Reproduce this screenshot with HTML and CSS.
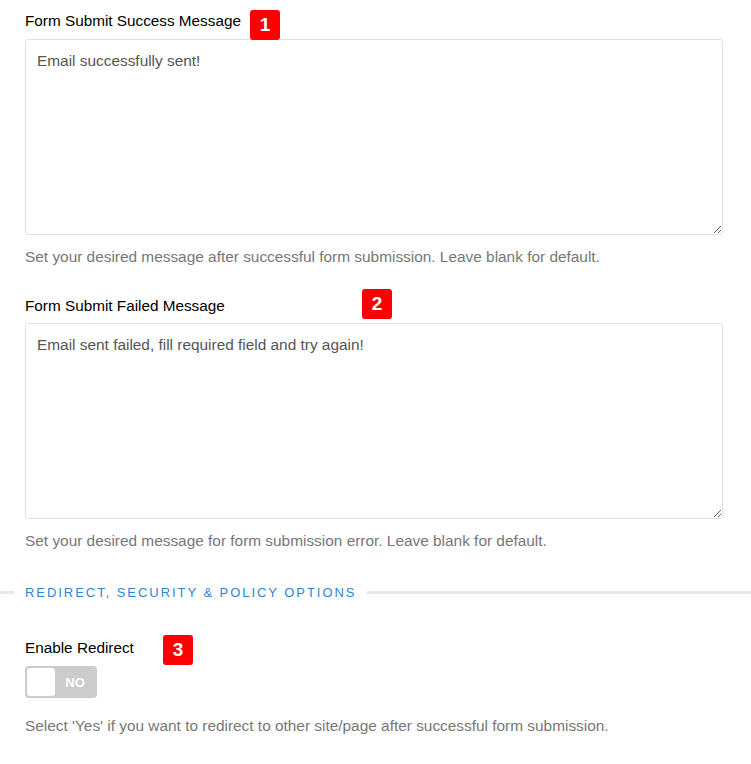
FILE: index.html
```html
<!DOCTYPE html>
<html>
<head>
<meta charset="utf-8">
<link rel="stylesheet" href="styles.css">
</head>
<body>
<div class="page">
  <div class="field">
    <div class="label-row"><label class="label">Form Submit Success Message</label><span class="badge badge-1">1</span></div>
    <textarea class="area">Email successfully sent!</textarea>
    <p class="help">Set your desired message after successful form submission. Leave blank for default.</p>
  </div>
  <div class="field field-2">
    <div class="label-row"><label class="label">Form Submit Failed Message</label><span class="badge badge-2">2</span></div>
    <textarea class="area">Email sent failed, fill required field and try again!</textarea>
    <p class="help">Set your desired message for form submission error. Leave blank for default.</p>
  </div>
  <div class="section">
    <span class="section-line short"></span>
    <span class="section-title">Redirect, Security &amp; Policy Options</span>
    <span class="section-line long"></span>
  </div>
  <div class="field field-3">
    <div class="label-row"><label class="label">Enable Redirect</label><span class="badge badge-3">3</span></div>
    <div class="toggle"><span class="knob"></span><span class="toggle-text">NO</span></div>
    <p class="help">Select 'Yes' if you want to redirect to other site/page after successful form submission.</p>
  </div>
</div>
</body>
</html>
```
FILE: styles.css
```css
* { box-sizing: border-box; }
html, body { margin: 0; padding: 0; background: #fff; }
body { font-family: "Liberation Sans", Arial, sans-serif; }
.page { width: 751px; padding-top: 11px; }
.field { padding: 0 29px 0 25px; }
.label-row { position: relative; height: 28px; }
.label { font-size: 15.3px; color: #000; line-height: 20px; display: block; }
.badge {
  position: absolute; width: 30px; height: 30px; background: #f00; color: #fff;
  border-radius: 3px; font-weight: bold; font-size: 19px; line-height: 30px; text-align: center;
}
.badge-1 { left: 225px; top: -1px; }
.badge-2 { left: 337px; top: -7px; }
.badge-3 { left: 138px; top: -3px; }
.area {
  display: block; width: 698px; height: 196px; border: 1px solid #e2e2e2; border-radius: 3px;
  padding: 12px 11px; font-family: "Liberation Sans", Arial, sans-serif; font-size: 15.4px; color: #555;
  resize: vertical; outline: none; margin: 0;
}
.help { margin: 12px 0 0; font-size: 15.4px; color: #777; line-height: 20px; }
.field-2 { margin-top: 29px; }
.field-2 .label-row { height: 27px; }
.section { display: flex; align-items: center; margin-top: 31px; height: 20px; }
.section-line { height: 3px; background: #e6e8ea; }
.section-line.short { width: 14px; margin-right: 11px; }
.section-line.long { flex: 1; margin-left: 11px; }
.section-title { font-size: 13px; letter-spacing: 1.95px; text-transform: uppercase; color: #2f86d6; white-space: nowrap; }
.field-3 { margin-top: 36px; }
.field-3 .label-row { height: 28px; }
.toggle {
  width: 72px; height: 32px; background: #ccc; border-radius: 4px; position: relative;
  display: flex; align-items: center; padding: 2px;
}
.knob { width: 28px; height: 28px; background: #fff; border-radius: 3px; }
.toggle-text { flex: 1; text-align: center; color: #fff; font-weight: bold; font-size: 13px; }
.field-3 .help { margin-top: 18px; }
```
